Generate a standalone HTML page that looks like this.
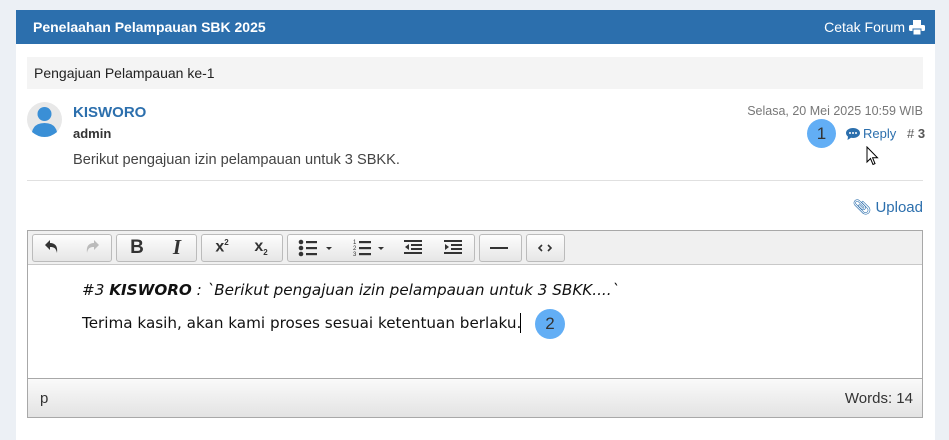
<!DOCTYPE html>
<html><head><meta charset="utf-8"><style>
*{box-sizing:border-box;margin:0;padding:0}
body{width:949px;height:431px;background:#ecf0f5;font-family:"Liberation Sans",sans-serif;position:relative;overflow:hidden}
.abs{position:absolute}
.panel{left:16px;top:10px;width:919px;height:430px;background:#fff}
.hdr{left:16px;top:10px;width:919px;height:34px;background:#2c6fad;color:#fff;font-weight:bold;font-size:14px}
.sub{left:27px;top:57px;width:896px;height:32px;background:#f4f4f4;font-size:14px;color:#222;padding:8px 7px}
.btn{position:absolute;top:234px;height:28px;border:1px solid #bbb;border-radius:3px;background:linear-gradient(#fdfdfd,#e6e6e6)}
.ic{position:absolute;top:238px;font-size:16px;color:#333;text-align:center;width:30px}
svg.t{position:absolute;top:239px}
</style></head><body>
<div class="abs panel"></div>
<div class="abs hdr"><span class="abs" style="left:17px;top:9px">Penelaahan Pelampauan SBK 2025</span>
<span class="abs" style="right:30px;top:9px;font-weight:normal">Cetak Forum</span>
<svg class="abs" style="right:10px;top:10px" width="16" height="15" viewBox="0 0 16 15"><rect x="4" y="0" width="8" height="5" fill="#fff"/><rect x="0" y="5" width="16" height="6" rx="1.5" fill="#fff"/><rect x="4" y="9" width="8" height="6" fill="#fff" stroke="#2c6fad" stroke-width="1"/></svg></div>
<div class="abs sub">Pengajuan Pelampauan ke-1</div>
<svg class="abs" style="left:27px;top:102px" width="35" height="35" viewBox="0 0 35 35"><circle cx="17.5" cy="17.5" r="17.5" fill="#e8e8e8"/><circle cx="17.5" cy="12" r="7" fill="#3a8fd6"/><path d="M5 30 Q7 21 17.5 21 Q28 21 30 30 Q24 35 17.5 35 Q11 35 5 30Z" fill="#3a8fd6"/></svg>
<div class="abs" style="left:73px;top:104px;font-size:15px;color:#2c6fad;font-weight:bold">KISWORO</div>
<div class="abs" style="left:73px;top:126px;font-size:13px;color:#333;font-weight:bold">admin</div>
<div class="abs" style="left:73px;top:152px;font-size:14.6px;color:#444">Berikut pengajuan izin pelampauan untuk 3 SBKK.</div>
<div class="abs" style="right:26px;top:104px;font-size:12.5px;color:#777">Selasa, 20 Mei 2025 10:59 WIB</div>
<div class="abs" style="left:807px;top:119px;width:29px;height:29px;border-radius:50%;background:#62aef5;color:#333;font-size:17px;text-align:center;line-height:29px">1</div>
<svg class="abs" style="left:846px;top:128px" width="14" height="12" viewBox="0 0 14 12"><path d="M7 0C3 0 0 2.2 0 5c0 1.5.8 2.8 2 3.6L1.5 12 5 9.8c.6.1 1.3.2 2 .2 4 0 7-2.2 7-5S11 0 7 0z" fill="#2c6fad"/><circle cx="4" cy="5" r="1" fill="#fff"/><circle cx="7" cy="5" r="1" fill="#fff"/><circle cx="10" cy="5" r="1" fill="#fff"/></svg>
<div class="abs" style="left:863px;top:126px;font-size:13px;color:#2c6fad">Reply</div>
<div class="abs" style="left:907px;top:126px;font-size:13px;color:#555"># <b>3</b></div>
<svg class="abs" style="left:866px;top:146px" width="13" height="20" viewBox="0 0 13 20"><path d="M1 1V16L4.5 12.5 7 18.5 9 17.6 6.6 11.8H11.5Z" fill="#fff" stroke="#000" stroke-width="1"/></svg>
<div class="abs" style="left:27px;top:180px;width:896px;height:1px;background:#e0e0e0"></div>
<div class="abs" style="right:26px;top:198px;font-size:15px;color:#2c6fad">&#x1F4CE;&#xFE0E; Upload</div>
<div class="abs" style="left:27px;top:230px;width:896px;height:188px;border:1px solid #a8a8a8;background:#fff"></div>
<div class="abs" style="left:28px;top:231px;width:894px;height:34px;background:#f0f0f0;border-bottom:1px solid #c8c8c8"></div>
<div class="btn" style="left:32px;width:80px"></div>
<div class="btn" style="left:116px;width:81px"></div>
<div class="btn" style="left:201px;width:82px"></div>
<div class="btn" style="left:287px;width:188px"></div>
<div class="btn" style="left:479px;width:43px"></div>
<div class="btn" style="left:526px;width:39px"></div>
<svg class="t" style="left:44px" width="16" height="16" viewBox="0 0 16 16"><path d="M1 6L6 1V4C11 4 14 7 13 14 12 9 10 8 6 8V11Z" fill="#333"/></svg>
<svg class="t" style="left:84px" width="16" height="16" viewBox="0 0 16 16"><path d="M15 6L10 1V4C5 4 2 7 3 14 4 9 6 8 10 8V11Z" fill="#bbb"/></svg>
<div class="ic" style="left:122px;font-weight:bold;font-size:19px;top:237px">B</div>
<div class="ic" style="left:162px;font-style:italic;font-weight:bold;font-family:'Liberation Serif',serif;font-size:21px;top:235px">I</div>
<div class="ic" style="left:207px;top:238px;font-weight:bold">x<sup style="font-size:8px">2</sup></div>
<div class="ic" style="left:246px;top:238px;font-weight:bold">x<sub style="font-size:8px">2</sub></div>
<svg class="t" style="left:298px" width="40" height="18" viewBox="0 0 40 18"><circle cx="3" cy="3" r="2.3" fill="#333"/><circle cx="3" cy="9" r="2.3" fill="#333"/><circle cx="3" cy="15" r="2.3" fill="#333"/><rect x="8" y="2" width="11" height="2.2" fill="#333"/><rect x="8" y="8" width="11" height="2.2" fill="#333"/><rect x="8" y="14" width="11" height="2.2" fill="#333"/><path d="M28 8H34L31 11Z" fill="#333"/></svg>
<svg class="t" style="left:353px" width="40" height="18" viewBox="0 0 40 18"><text x="0" y="5" font-size="6" fill="#333" font-family="Liberation Sans">1</text><text x="0" y="11" font-size="6" fill="#333" font-family="Liberation Sans">2</text><text x="0" y="17" font-size="6" fill="#333" font-family="Liberation Sans">3</text><rect x="6" y="2" width="12" height="2.2" fill="#333"/><rect x="6" y="8" width="12" height="2.2" fill="#333"/><rect x="6" y="14" width="12" height="2.2" fill="#333"/><path d="M25 8H31L28 11Z" fill="#333"/></svg>
<svg class="t" style="left:404px" width="18" height="18" viewBox="0 0 18 18"><rect x="0" y="1" width="18" height="2" fill="#333"/><rect x="7" y="5" width="11" height="2" fill="#333"/><rect x="7" y="9" width="11" height="2" fill="#333"/><rect x="0" y="13" width="18" height="2" fill="#333"/><path d="M5 5V11L1 8Z" fill="#333"/></svg>
<svg class="t" style="left:444px" width="18" height="18" viewBox="0 0 18 18"><rect x="0" y="1" width="18" height="2" fill="#333"/><rect x="7" y="5" width="11" height="2" fill="#333"/><rect x="7" y="9" width="11" height="2" fill="#333"/><rect x="0" y="13" width="18" height="2" fill="#333"/><path d="M1 5V11L5 8Z" fill="#333"/></svg>
<div class="abs" style="left:490px;top:247px;width:18px;height:2px;background:#333"></div>
<svg class="t" style="left:538px;top:244px" width="14" height="8" viewBox="0 0 14 8"><path d="M4 1L1 4 4 7M10 1L13 4 10 7" stroke="#333" stroke-width="1.6" fill="none"/></svg>
<div class="abs" style="left:82px;top:281px;font-family:'DejaVu Sans',sans-serif;font-size:15.2px;color:#111;font-style:italic">#3 <b>KISWORO</b> : `Berikut pengajuan izin pelampauan untuk 3 SBKK....`</div>
<div class="abs" style="left:82px;top:314px;font-family:'DejaVu Sans',sans-serif;font-size:15.2px;color:#111">Terima kasih, akan kami proses sesuai ketentuan berlaku.</div>
<div class="abs" style="left:520px;top:313px;width:1px;height:20px;background:#000"></div>
<div class="abs" style="left:535px;top:309px;width:30px;height:30px;border-radius:50%;background:#62aef5;color:#333;font-size:17px;text-align:center;line-height:30px">2</div>
<div class="abs" style="left:28px;top:378px;width:894px;height:39px;border-top:1px solid #a8a8a8;background:linear-gradient(#fafafa,#e3e3e3)"></div>
<div class="abs" style="left:40px;top:390px;font-size:15px;color:#333">p</div>
<div class="abs" style="right:36px;top:390px;font-size:15px;color:#333">Words: 14</div>
</body></html>
